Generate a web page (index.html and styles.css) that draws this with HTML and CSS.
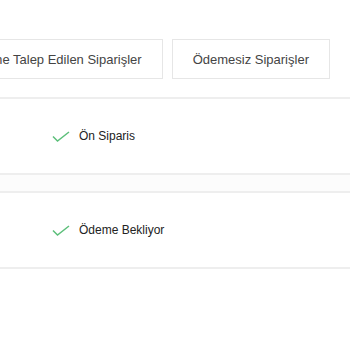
FILE: index.html
```html
<!DOCTYPE html>
<html>
<head>
<meta charset="utf-8">
<link rel="stylesheet" href="styles.css">
</head>
<body>
<div class="page">
  <div class="tabs">
    <button class="tab tab-first">Ödeme Talep Edilen Siparişler</button>
    <button class="tab">Ödemesiz Siparişler</button>
  </div>
  <div class="list">
    <div class="row">
      <span class="status">
        <svg class="check" width="18" height="11" viewBox="0 0 18 11"><path d="M1 5.5 L5.5 10 L17 1" fill="none" stroke="#5cbf7a" stroke-width="1.5"/></svg>
        <span>Ön Siparis</span>
      </span>
    </div>
    <div class="sep"></div>
    <div class="row">
      <span class="status">
        <svg class="check" width="18" height="11" viewBox="0 0 18 11"><path d="M1 5.5 L5.5 10 L17 1" fill="none" stroke="#5cbf7a" stroke-width="1.5"/></svg>
        <span>Ödeme Bekliyor</span>
      </span>
    </div>
  </div>
</div>
</body>
</html>
```
FILE: styles.css
```css
html, body {
  margin: 0;
  padding: 0;
  background: #fff;
  overflow: hidden;
}
.page {
  font-family: "Liberation Sans", Arial, sans-serif;
  color: #333;
  padding-top: 39px;
}
.tabs {
  display: flex;
  gap: 9px;
  margin-left: -54px;
}
.tab {
  height: 40px;
  padding: 0 20px;
  border: 1px solid #e6e6e6;
  background: #fff;
  font-family: "Liberation Sans", Arial, sans-serif;
  font-size: 13px;
  color: #444;
  white-space: nowrap;
}
.list {
  margin-top: 18px;
}
.row {
  height: 74px;
  border-top: 2px solid #eeeeee;
  border-bottom: 2px solid #eeeeee;
  display: flex;
  align-items: center;
  padding-left: 52px;
}
.sep {
  height: 16px;
  background: #fcfcfc;
}
.status {
  display: flex;
  align-items: center;
  gap: 9px;
  font-size: 12px;
  color: #222;
}
.check {
  display: block;
}
```
